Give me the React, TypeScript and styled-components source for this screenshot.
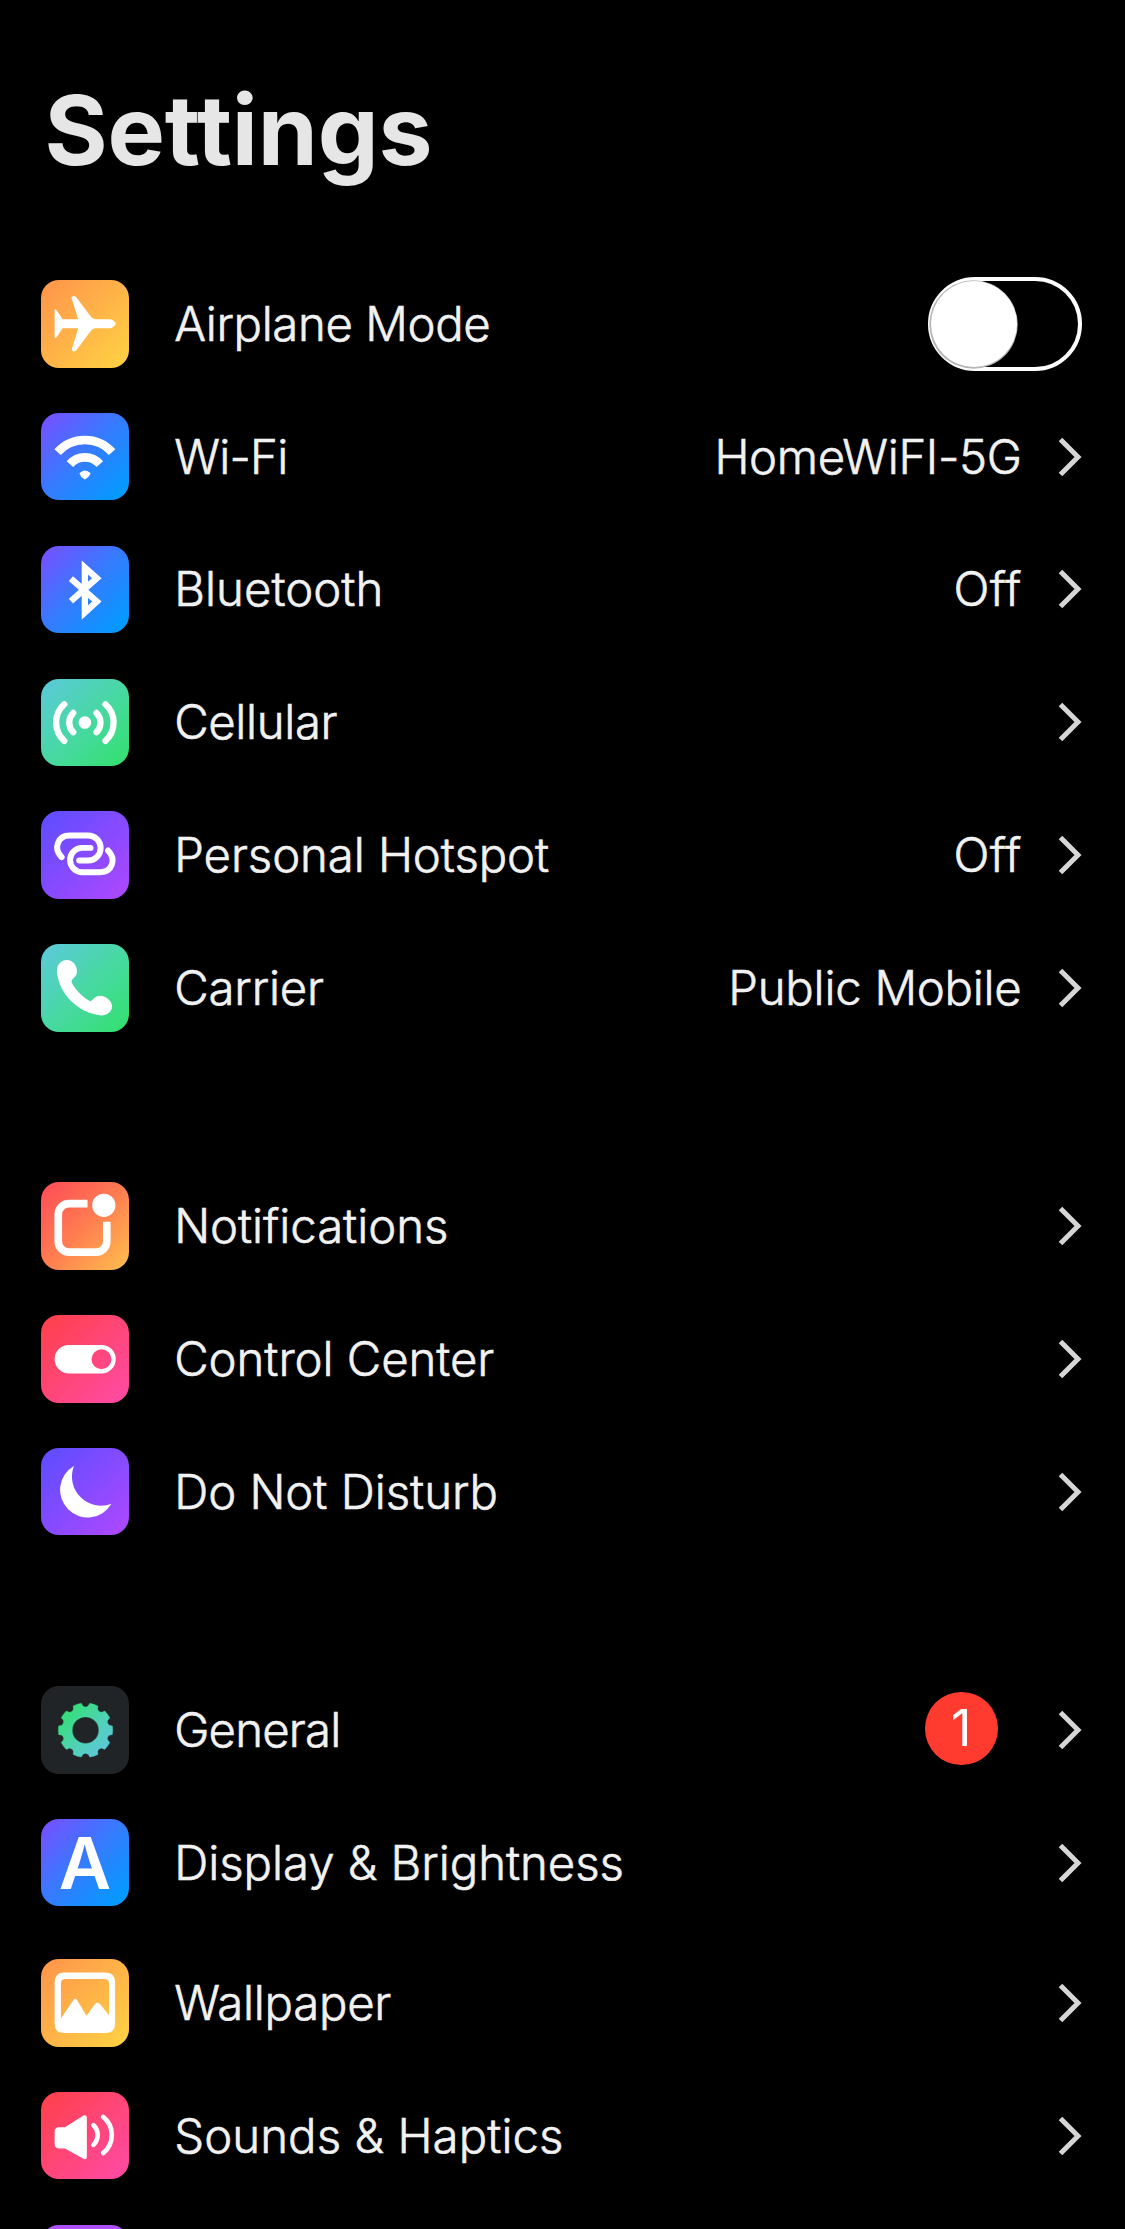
import React from 'react';
import styled, { createGlobalStyle, css } from 'styled-components';

const GlobalStyle = createGlobalStyle`
  html, body { margin: 0; background: #000; }
  body { overflow: hidden; }
  *, *::before, *::after { box-sizing: border-box; }
`;

const Screen = styled.main`
  width: 1125px;
  height: 2229px;
  overflow: hidden;
  display: flex;
  flex-direction: column;
  background: #000;
  color: #f2f2f2;
  font-family: Inter, 'Liberation Sans', sans-serif;
`;

const Title = styled.h1`
  margin: 0;
  height: 257.4px;
  padding: 71px 0 0 44.5px;
  flex: none;
  font-size: 96.5px;
  line-height: 119px;
  font-weight: 700;
  letter-spacing: -0.15px;
  color: #e6e6e6;
`;

const Group = styled.section<{ $gap: number }>`
  flex: none;
  margin-bottom: ${(p) => p.$gap}px;
`;

const Row = styled.div`
  height: 132.83px;
  padding: 0 43.5px 0 41.3px;
  flex: none;
  display: flex;
  align-items: center;
`;

const Tile = styled.div<{ $fill: string }>`
  width: 87.4px;
  height: 87.4px;
  flex: none;
  display: flex;
  align-items: center;
  justify-content: center;
  border-radius: 18px;
  background: ${(p) => p.$fill};
  svg { display: block; width: 100%; height: 100%; }
`;

const Letter = styled.span`
  font-size: 72px;
  line-height: 87px;
  font-weight: 600;
  color: #fff;
`;

const rowText = css<{ $spacing: number }>`
  font-size: 47.3px;
  line-height: 60px;
  font-weight: 300;
  -webkit-text-stroke: 0.6px #f2f2f2;
  letter-spacing: ${(p) => p.$spacing}px;
  white-space: nowrap;
`;

const Label = styled.span<{ $spacing: number }>`
  ${rowText}
  flex: 1;
  margin-left: 45.5px;
`;

const Value = styled.span<{ $spacing: number }>`
  ${rowText}
  margin-right: 36px;
`;

const Badge = styled.span`
  width: 72.5px;
  height: 72.5px;
  margin: -3px 60px 0 0;
  display: flex;
  align-items: center;
  justify-content: center;
  border-radius: 50%;
  background: #ff3b30;
  color: #fff;
  font-size: 50px;
  line-height: 72px;
`;

const Switch = styled.button`
  width: 154px;
  height: 94px;
  padding: 0;
  display: flex;
  align-items: center;
  border: 4.4px solid #fff;
  border-radius: 47px;
  background: transparent;
`;

const Knob = styled.span`
  width: 86px;
  height: 86px;
  margin-left: -0.5px;
  flex: none;
  border-radius: 50%;
  background: #fff;
  box-shadow: -0.5px 0.5px 0 1.2px #b5b5b5;
`;

const Chevron = styled.svg`
  width: 24px;
  height: 40px;
  flex: none;
  display: block;
`;

const ORANGE = 'linear-gradient(135deg, #ff9a4b 10%, #ffd043 95%)';
const BLUE = 'linear-gradient(135deg, #7a4dff 0%, #3a78ff 45%, #009dff 95%)';
const GREEN = 'linear-gradient(135deg, #5cc9dc 0%, #48d8a4 50%, #33e16c 100%)';
const PURPLE = 'linear-gradient(135deg, #5b4dff 0%, #b048ff 100%)';
const CORAL = 'linear-gradient(135deg, #ff4a58 0%, #ff7d50 50%, #ffc04e 100%)';
const PINK = 'linear-gradient(135deg, #ff4048 0%, #ff4a9e 90%)';
const VIOLET = 'linear-gradient(180deg, #b050f8 0%, #6048ff 100%)';

const Glyph = ({ children }: { children: React.ReactNode }) => (
  <svg viewBox="0 0 263 263" fill="none" stroke="none" aria-hidden="true">
    {children}
  </svg>
);

const Airplane = () => (
  <Glyph>
    <path
      fill="#fff"
      d="M41 90Q43 86 47 91L65 118H112L92 55Q91 49 98 48Q104 48 108 54L147 106Q155 118 165 118H208Q219 119 225 131Q219 144 208 145H165Q155 145 147 157L108 209Q104 216 97 215Q91 214 93 208L112 145H65L47 172Q43 176 41 172Z"
    />
  </Glyph>
);

const Wifi = () => (
  <Glyph>
    <path stroke="#fff" strokeWidth="26" d="M50 118A110 110 0 0 1 214 118M87 154A60 60 0 0 1 177 154" />
    <path fill="#fff" stroke="#fff" strokeWidth="4" strokeLinejoin="round" d="M118 182Q132 168 147 182Q144 190 132 198Q120 190 118 182Z" />
  </Glyph>
);

const Bluetooth = () => (
  <Glyph>
    <path stroke="#fff" strokeWidth="19" strokeMiterlimit="5" d="M90 98L168 167L132 200V65L168 97L90 166" />
  </Glyph>
);

const Cellular = () => (
  <Glyph>
    <circle cx="132" cy="131" r="19" fill="#fff" />
    <path
      stroke="#fff"
      strokeWidth="19"
      strokeLinecap="round"
      d="M70 76A74 74 0 0 0 70 186M97 102A41 41 0 0 0 97 160M194 76A74 74 0 0 1 194 186M167 102A41 41 0 0 1 167 160"
    />
  </Glyph>
);

const Hotspot = () => (
  <Glyph>
    <path
      stroke="#fff"
      strokeWidth="18"
      strokeLinecap="round"
      d="M62 139C36 112 51 74 86 74H142A37.5 37.5 0 0 1 142 149H115M149 111H124A36.5 36.5 0 0 0 124 184H178C215 184 227 144 202 119"
    />
  </Glyph>
);

const Phone = () => (
  <Glyph>
    <path
      fill="#fff"
      d="M48 84C46 62 62 48 78 48C98 48 110 68 108 85C107 100 93 102 92 113C95 130 130 165 148 172C158 170 160 157 175 156C195 155 214 172 214 188C213 205 198 215 182 215C110 207 55 150 48 84Z"
    />
  </Glyph>
);

const Notifications = () => (
  <Glyph>
    <path stroke="#fff" strokeWidth="23" d="M140 65H84A32 32 0 0 0 52 97V179A32 32 0 0 0 84 211H166A32 32 0 0 0 198 179V120" />
    <circle cx="189" cy="70" r="35" fill="#fff" />
  </Glyph>
);

const ControlCenter = () => (
  <Glyph>
    <path
      fill="#fff"
      fillRule="evenodd"
      d="M84 90H182A43 43 0 0 1 182 176H84A43 43 0 0 1 84 90ZM182 103A30 30 0 1 0 182 163A30 30 0 1 0 182 103Z"
    />
  </Glyph>
);

const Moon = () => (
  <Glyph>
    <path fill="#fff" d="M99 54A83 83 0 1 0 212 168A88 88 0 0 1 99 54Z" />
  </Glyph>
);

const gearOutline = () => {
  const teeth = 10;
  const step = 360 / teeth;
  const at = (r: number, deg: number) => {
    const a = (deg * Math.PI) / 180;
    return `${(134 + r * Math.cos(a)).toFixed(1)} ${(133 + r * Math.sin(a)).toFixed(1)}`;
  };
  let d = '';
  for (let i = 0; i < teeth; i++) {
    const c = -90 + i * step;
    d += `${i ? 'L' : 'M'}${at(82, c - 9)}L${at(73, c - 6)}Q${at(67, c)} ${at(73, c + 6)}L${at(82, c + 9)}A83 83 0 0 1 ${at(82, c + step - 9)}`;
  }
  return `${d}ZM134 93A40 40 0 1 0 134 173A40 40 0 1 0 134 93Z`;
};

const Gear = () => (
  <Glyph>
    <defs>
      <linearGradient id="gear" x1="0" y1="0" x2="1" y2="1">
        <stop offset="0.1" stopColor="#30e070" />
        <stop offset="0.55" stopColor="#50d2b4" />
        <stop offset="0.95" stopColor="#5fc4e4" />
      </linearGradient>
    </defs>
    <path fill="url(#gear)" stroke="url(#gear)" strokeWidth="1" strokeLinejoin="round" fillRule="evenodd" d={gearOutline()} />
  </Glyph>
);

const Wallpaper = () => (
  <Glyph>
    <path
      fill="#fff"
      fillRule="evenodd"
      d="M68 41H195Q223 42 223 70V195Q222 223 195 223H68Q41 222 41 195V70Q42 42 68 41ZM72 60Q60 61 60 73V179L97 124Q103 116 109 124L137 171L162 136Q170 128 178 136L205 169V73Q204 61 193 60Z"
    />
  </Glyph>
);

const Sounds = () => (
  <Glyph>
    <path fill="#fff" d="M53 106H72L128 71Q137 67 138 77V195Q137 206 128 201L72 170H53Q42 169 41 158V118Q42 107 53 106Z" />
    <path stroke="#fff" strokeWidth="14" strokeLinecap="round" d="M158 100A41 41 0 0 1 158 159M187 75A70 70 0 0 1 187 184" />
  </Glyph>
);

type Item = {
  label: string;
  spacing: number;
  fill: string;
  icon: React.ReactNode;
  value?: string;
  valueSpacing?: number;
  badge?: string;
  toggle?: boolean;
};

const groups: { gap: number; items: Item[] }[] = [
  {
    gap: 105.3,
    items: [
      { label: 'Airplane Mode', spacing: -0.38, fill: ORANGE, icon: <Airplane />, toggle: true },
      { label: 'Wi-Fi', spacing: -0.75, fill: BLUE, icon: <Wifi />, value: 'HomeWiFI-5G', valueSpacing: -0.35 },
      { label: 'Bluetooth', spacing: 0.05, fill: BLUE, icon: <Bluetooth />, value: 'Off', valueSpacing: 0.3 },
      { label: 'Cellular', spacing: -0.35, fill: GREEN, icon: <Cellular /> },
      { label: 'Personal Hotspot', spacing: -0.08, fill: PURPLE, icon: <Hotspot />, value: 'Off', valueSpacing: 0.3 },
      { label: 'Carrier', spacing: -0.15, fill: GREEN, icon: <Phone />, value: 'Public Mobile', valueSpacing: -0.25 },
    ],
  },
  {
    gap: 105.3,
    items: [
      { label: 'Notifications', spacing: -0.05, fill: CORAL, icon: <Notifications /> },
      { label: 'Control Center', spacing: -0.05, fill: PINK, icon: <ControlCenter /> },
      { label: 'Do Not Disturb', spacing: -0.03, fill: PURPLE, icon: <Moon /> },
    ],
  },
  {
    gap: 7.4,
    items: [
      { label: 'General', spacing: -0.8, fill: '#212427', icon: <Gear />, badge: '1' },
      { label: 'Display & Brightness', spacing: -0.03, fill: BLUE, icon: <Letter>A</Letter> },
    ],
  },
  {
    gap: 0,
    items: [
      { label: 'Wallpaper', spacing: -0.25, fill: ORANGE, icon: <Wallpaper /> },
      { label: 'Sounds & Haptics', spacing: 0.08, fill: PINK, icon: <Sounds /> },
    ],
  },
];

const SettingRow = ({ item }: { item: Item }) => (
  <Row>
    <Tile $fill={item.fill}>{item.icon}</Tile>
    <Label $spacing={item.spacing}>{item.label}</Label>
    {item.value && <Value $spacing={item.valueSpacing ?? 0}>{item.value}</Value>}
    {item.badge && <Badge>{item.badge}</Badge>}
    {item.toggle ? (
      <Switch role="switch" aria-checked="false" aria-label={item.label}>
        <Knob />
      </Switch>
    ) : (
      <Chevron viewBox="0 0 24 40" fill="none" stroke="#d6d6d6" strokeWidth="5">
        <path d="M2.5 2.5L20 20L2.5 37.5" />
      </Chevron>
    )}
  </Row>
);

export default function App() {
  return (
    <>
      <GlobalStyle />
      <Screen>
        <Title>Settings</Title>
        {groups.map((group) => (
          <Group key={group.items[0].label} $gap={group.gap}>
            {group.items.map((item) => (
              <SettingRow key={item.label} item={item} />
            ))}
          </Group>
        ))}
        <Row>
          <Tile $fill={VIOLET} />
        </Row>
      </Screen>
    </>
  );
}
